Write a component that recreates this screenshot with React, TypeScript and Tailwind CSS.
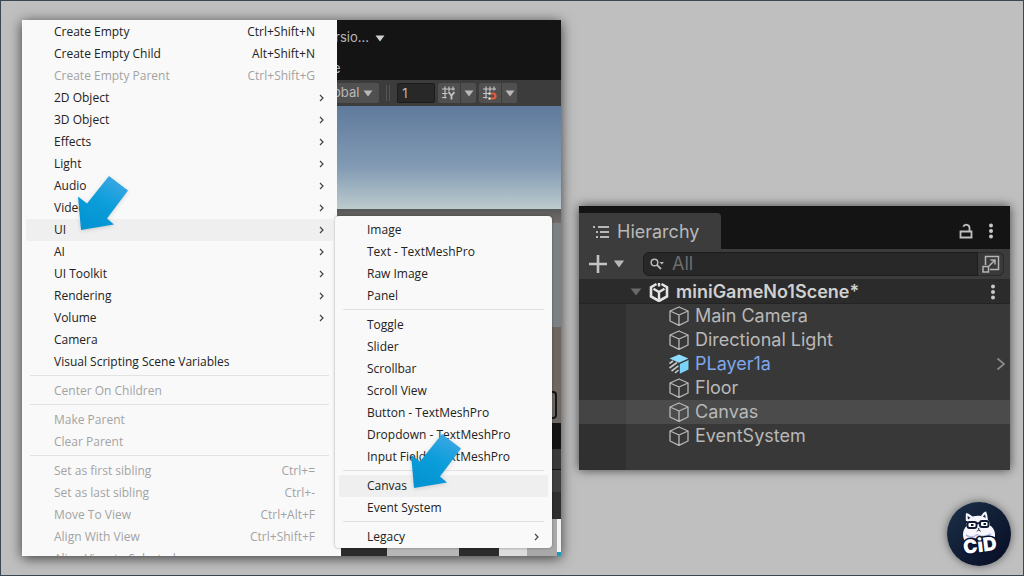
import clsx from "clsx";
import type { ReactNode } from "react";

type Entry = {
  label: string;
  shortcut?: string;
  submenu?: boolean;
  disabled?: boolean;
  active?: boolean;
};

const objectMenu: Entry[][] = [
  [
    { label: "Create Empty", shortcut: "Ctrl+Shift+N" },
    { label: "Create Empty Child", shortcut: "Alt+Shift+N" },
    { label: "Create Empty Parent", shortcut: "Ctrl+Shift+G", disabled: true },
    { label: "2D Object", submenu: true },
    { label: "3D Object", submenu: true },
    { label: "Effects", submenu: true },
    { label: "Light", submenu: true },
    { label: "Audio", submenu: true },
    { label: "Video", submenu: true },
    { label: "UI", submenu: true, active: true },
    { label: "AI", submenu: true },
    { label: "UI Toolkit", submenu: true },
    { label: "Rendering", submenu: true },
    { label: "Volume", submenu: true },
    { label: "Camera" },
    { label: "Visual Scripting Scene Variables" }
  ],
  [{ label: "Center On Children", disabled: true }],
  [
    { label: "Make Parent", disabled: true },
    { label: "Clear Parent", disabled: true }
  ],
  [
    { label: "Set as first sibling", shortcut: "Ctrl+=", disabled: true },
    { label: "Set as last sibling", shortcut: "Ctrl+-", disabled: true },
    { label: "Move To View", shortcut: "Ctrl+Alt+F", disabled: true },
    { label: "Align With View", shortcut: "Ctrl+Shift+F", disabled: true },
    { label: "Align View to Selected", disabled: true }
  ]
];

const uiMenu: Entry[][] = [
  [
    { label: "Image" },
    { label: "Text - TextMeshPro" },
    { label: "Raw Image" },
    { label: "Panel" }
  ],
  [
    { label: "Toggle" },
    { label: "Slider" },
    { label: "Scrollbar" },
    { label: "Scroll View" },
    { label: "Button - TextMeshPro" },
    { label: "Dropdown - TextMeshPro" },
    { label: "Input Field - TextMeshPro" }
  ],
  [{ label: "Canvas", active: true }, { label: "Event System" }],
  [{ label: "Legacy", submenu: true }]
];

const sceneObjects = [
  { name: "Main Camera" },
  { name: "Directional Light" },
  { name: "PLayer1a", prefab: true },
  { name: "Floor" },
  { name: "Canvas", active: true },
  { name: "EventSystem" }
];

function Menu({ label, groups, className }: { label: string; groups: Entry[][]; className: string }) {
  return (
    <div
      role="menu"
      aria-label={label}
      className={clsx("bg-[#f9f9f9] font-['Open_Sans','Noto_Sans',sans-serif] text-xs text-[#222]", className)}
    >
      {groups.map((group, index) => (
        <div key={index}>
          {index > 0 ? <div role="separator" className="mx-2 mt-0.5 mb-1 h-px bg-[#e2e2e2]" /> : null}
          {group.map((entry) => (
            <button
              key={entry.label}
              type="button"
              role="menuitem"
              disabled={entry.disabled}
              className={clsx(
                "mx-1 flex h-[22px] w-[calc(100%-8px)] items-center rounded-xs pr-2 pl-7 text-left whitespace-nowrap",
                entry.active && "bg-[#efefef]",
                entry.disabled && "text-[#a3a3a3]"
              )}
            >
              <span className="flex-1">{entry.label}</span>
              {entry.shortcut ? <span className="pr-2.5">{entry.shortcut}</span> : null}
              {entry.submenu ? (
                <svg viewBox="0 0 8 8" className="size-2 fill-none stroke-[#444]">
                  <path d="M3 1 6 4 3 7" strokeWidth="1.2" />
                </svg>
              ) : null}
            </button>
          ))}
        </div>
      ))}
    </div>
  );
}

function Caret({ className }: { className: string }) {
  return (
    <svg viewBox="0 0 10 7" className={className} fill="currentColor">
      <path d="M.5.5h9L5 6.5z" />
    </svg>
  );
}

function Pointer({ id, className }: { id: string; className: string }) {
  return (
    <svg viewBox="0 0 52 57" className={clsx("absolute h-[57px] w-[52px] drop-shadow-sm", className)}>
      <defs>
        <linearGradient id={id} x1="0.8" y1="0" x2="0.3" y2="1">
          <stop offset="0" stopColor="#41a8e4" />
          <stop offset="0.5" stopColor="#0b9edb" />
          <stop offset="1" stopColor="#0493d2" />
        </linearGradient>
      </defs>
      <path d="M32 1 51 15.5 30 43.5 37 49.5 4 55 1 21.5 10 28.5z" fill={`url(#${id})`} />
    </svg>
  );
}

function GridIcon({ children }: { children: ReactNode }) {
  return (
    <svg viewBox="0 0 14 14" className="size-3.5 fill-none stroke-[#c4c4c4]">
      <path d="M0 3h13M0 7.5h5.5M0 11.5h4.5M3 .5v12M7 .5v5M11 .5v4" strokeWidth="1.2" />
      {children}
    </svg>
  );
}

function SceneView() {
  return (
    <div className="flex min-w-0 flex-1 flex-col overflow-hidden bg-[#141414] font-[Inter,sans-serif] text-[#b8b8b8]">
      <div className="flex h-9 items-center gap-1.5 text-[13px]">
        <span className="-ml-0.5">rsio...</span>
        <Caret className="h-[7px] w-2.5 text-[#d0d0d0]" />
      </div>
      <div className="h-6 text-[13px] leading-6">
        <span className="-ml-1">e</span>
      </div>
      <div className="flex h-[26px] items-center bg-[#3c3c3c] text-[13px]">
        <button type="button" className="-ml-1 flex h-5 items-center gap-1 rounded-xs bg-[#505050] pr-1.5">
          <span>obal</span>
          <Caret className="h-[7px] w-2.5" />
        </button>
        <div className="mx-[7px] h-4 w-1 border-x border-[#555]" />
        <input
          aria-label="Snap increment"
          defaultValue="1"
          className="mr-[3px] h-5 w-[38px] rounded-xs border border-[#1c1c1c] bg-[#282828] px-1 outline-none"
        />
        <div className="mr-[3px] flex gap-px">
          <button type="button" aria-label="Grid axis" className="flex h-5 w-[22px] items-center justify-center rounded-l-xs bg-[#505050]">
            <GridIcon>
              <path d="M6.5 6 9.5 9.5 12.500 6M9.5 9.5V13.5" strokeWidth="1.8" />
            </GridIcon>
          </button>
          <button type="button" aria-label="Grid axis options" className="flex h-5 w-[15px] items-center justify-center rounded-r-xs bg-[#505050]">
            <Caret className="h-[7px] w-2.5" />
          </button>
        </div>
        <div className="flex gap-px">
          <button type="button" aria-label="Grid snapping" className="flex h-5 w-[22px] items-center justify-center rounded-l-xs bg-[#505050]">
            <GridIcon>
              <path d="M7.5 7.5H10a2.500 2.500 0 0 1 0 5H7.500" className="stroke-[#e8593a]" strokeWidth="2.2" />
              <path d="M5.5 7.5h2M5.500 12.500h2" className="stroke-white" strokeWidth="2.2" />
            </GridIcon>
          </button>
          <button type="button" aria-label="Grid snapping options" className="flex h-5 w-[15px] items-center justify-center rounded-r-xs bg-[#505050]">
            <Caret className="h-[7px] w-2.5" />
          </button>
        </div>
      </div>

      {/* sky and ground */}
      <div className="h-[103px] bg-linear-to-b from-[#5f7a9c] via-[#839bb4] via-60% to-[#bccbcc]" />
      <div className="h-3.5 bg-linear-to-b from-[#59595a] to-[#716c69]" />
      <div className="h-[104px] bg-[#7b8184]" />
      <div className="flex h-24 items-end justify-end bg-[#6f6761]">
        <div className="mr-1 mb-1 h-7 w-6 rounded-sm border-2 border-[#161616]" />
      </div>
      <div className="h-[26px] bg-[#141414]" />
      <div className="h-5 bg-[#3a3a3a]" />
      <div className="mt-px h-[22px] bg-[#3e3e3e]" />
      <div className="h-[27px] bg-[#2f2f2f]" />
      <div className="flex flex-1 bg-[#fafafa]">
        <div className="ml-1 w-[46px] bg-[#2b2b2b]" />
        <div className="flex-1 bg-[#b7b7b7]" />
        <div className="w-10 bg-[#2b2b2b]" />
        <div className="w-7 bg-[#dcdcdc]" />
        <div className="w-[30px] bg-[#a9a9a9]" />
        <div className="flex w-1 items-end bg-[#f2f2f2]">
          <div className="h-1 w-full bg-[#1f9cb5]" />
        </div>
      </div>
    </div>
  );
}

function CubeIcon({ prefab }: { prefab?: boolean }) {
  if (prefab) {
    return (
      <svg viewBox="0 0 20 20" className="size-5">
        <path d="M10 .5 19.500 4.500 10 8.800 .5 4.500z" fill="#8fdcff" />
        <path d="M10.800 10 19.500 6v9.500L10.800 19.800z" fill="#7ad3fb" />
        <path d="M.5 9.500 4 7M.5 14 8 8.500M2.500 17 9.500 11.800M6 18.800 9.500 16" stroke="#c8c8c8" strokeWidth="1.6" />
      </svg>
    );
  }

  return (
    <svg viewBox="0 0 20 20" className="size-5 fill-none stroke-[#b8b8b8]">
      <path d="M10 1 19 5v10l-9 4.300L1 15V5zM1 5l9 4 9-4M10 9v10" strokeWidth="1.3" strokeLinejoin="round" />
    </svg>
  );
}

function MoreButton({ label }: { label: string }) {
  return (
    <button type="button" aria-label={label} className="flex size-4 items-center justify-center">
      <svg viewBox="0 0 4 16" className="h-4 w-1 fill-[#c8c8c8]">
        <circle cx="2" cy="2.500" r="2" />
        <circle cx="2" cy="8" r="2" />
        <circle cx="2" cy="13.500" r="2" />
      </svg>
    </button>
  );
}

function HierarchyPanel() {
  return (
    <section className="flex min-w-0 flex-1 flex-col self-start bg-[#383838] font-[Inter,sans-serif] text-lg text-[#b8b8b8] shadow-[0_0_10px_rgba(0,0,0,0.65)]">
      <header className="flex h-[43px] items-end justify-between bg-[#141414]">
        <h2 className="flex h-9 w-[142px] items-center gap-2 rounded-tr-sm bg-[#3c3c3c] pt-0.5 pl-3.5">
          <svg viewBox="0 0 16 14" className="h-3.5 w-4 fill-none stroke-[#b8b8b8]">
            <path d="M0 2h2M5 2h11M3 7h2M7 7h9M3 12h2M7 12h9" strokeWidth="1.8" />
          </svg>
          Hierarchy
        </h2>
        <div className="flex h-9 items-center gap-2.5 pr-[11px]">
          <button type="button" aria-label="Lock">
            <svg viewBox="0 0 14 16" className="h-4 w-3.5 fill-none stroke-[#c0c0c0]">
              <path d="M1.500 8.500h11v6h-11zM10.500 8V5a3.200 3.200 0 0 0-6.200-1.200" strokeWidth="1.8" />
            </svg>
          </button>
          <MoreButton label="Panel options" />
        </div>
      </header>

      <div className="flex h-[30px] items-center bg-[#3c3c3c] pr-1.5 pl-2.5">
        <button type="button" aria-label="Create" className="flex items-center gap-1.5">
          <svg viewBox="0 0 18 18" className="size-[18px] stroke-[#c4c4c4]">
            <path d="M9 0v18M0 9h18" strokeWidth="2.6" />
          </svg>
          <Caret className="h-2 w-3" />
        </button>
        <div className="ml-[18px] flex h-6 flex-1 items-center gap-2 rounded-l-md border border-[#1c1c1c] bg-[#282828] pl-1.5">
          <svg viewBox="0 0 14 12" className="h-3 w-3.5 shrink-0 fill-none stroke-[#b8b8b8]">
            <circle cx="4.500" cy="4.500" r="3.300" strokeWidth="1.5" />
            <path d="M7 7l4 4" strokeWidth="1.8" />
            <path d="M9.500 4H14l-2.200 2.500z" fill="#b8b8b8" stroke="none" />
          </svg>
          <input
            type="search"
            aria-label="Search hierarchy"
            placeholder="All"
            className="w-full min-w-0 bg-transparent outline-none placeholder:text-[#6e6e6e]"
          />
        </div>
        <button type="button" aria-label="Open search window" className="flex h-6 w-[26px] items-center justify-center rounded-r-md border border-l-0 border-[#2a2a2a] bg-[#3a3a3a]">
          <svg viewBox="0 0 18 18" className="size-[18px] fill-none stroke-[#b4b4b4]">
            <path d="M3.500 10V1.500h13v13H8M1 11.500h5.500V17H1zM7 11l6-6M8.500 5H13v4.500" strokeWidth="1.5" />
          </svg>
        </button>
      </div>

      <div className="flex h-[25px] items-center border-b border-[#242424] bg-[#2b2b2b] pt-px pr-[9px] pl-[51px]">
        <Caret className="h-3 w-3 text-[#696969]" />
        <svg viewBox="0 0 20 20" className="mx-[7px] size-5 fill-none stroke-[#e4e4e4]">
          <path d="M7.500 2 2 5.200v9.300L10 19l8-4.500V5.200L12.500 2" strokeWidth="2.6" />
          <path d="M4.500 6.800 10 10l5.500-3.200M10 10v7M10 1v3.500" strokeWidth="2.4" />
        </svg>
        <span className="flex-1 font-semibold text-[#d0d0d0]">miniGameNo1Scene*</span>
        <MoreButton label="Scene options" />
      </div>

      <ul className="bg-linear-to-r from-[#303030] from-[47px] to-[#383838] to-[47px] pb-[22px]">
        {sceneObjects.map((item) => (
          <li
            key={item.name}
            className={clsx(
              "flex h-6 items-center gap-1.5 pr-1 pl-[90px]",
              item.active && "bg-linear-to-r from-[#444] from-[47px] to-[#4b4b4b] to-[47px]",
              item.prefab && "text-[#7fa6ea]"
            )}
          >
            <CubeIcon prefab={item.prefab} />
            <span className="flex-1">{item.name}</span>
            {item.prefab ? (
              <svg viewBox="0 0 10 14" className="h-3.5 w-2.5 fill-none stroke-[#8a8a8a]">
                <path d="M1.500 1.500 8 7l-6.500 5.500" strokeWidth="1.7" />
              </svg>
            ) : null}
          </li>
        ))}
      </ul>
    </section>
  );
}

function ChannelLogo() {
  return (
    <div className="absolute right-3 bottom-[9px] size-16 rounded-full bg-linear-to-br from-[#1b3047] to-[#070d24] shadow-[0_0_8px_rgba(0,0,0,0.5)]">
      <svg viewBox="0 0 64 64" className="size-full" role="img" aria-label="CiD">
        <path
          d="M19 11c3 .5 4.800 2 6.500 3.600 2.800-.8 5.800-1 8.500-.6C35.500 11.800 36.800 10 39 9.500c1.300 2.700 1.600 5.500 1.800 8 1.500 1.500 2.200 4 2 6 4 2 5.700 6.500 5.200 11.500-10-1-20.500.5-30 4.500-3.500-6-2-12.500 2-16C18.600 19.500 18.500 15 19 11z"
          fill="#f6f6fc"
        />
        <path d="M19 33c4 3 8 2.500 11-.5 3 2.500 9 2.500 14-.5" fill="none" stroke="#b9bce0" strokeWidth="1.6" />
        <path d="M20.500 14l.5 3.500 2.500-1.800zM38 12.500l.8 3.500-3-1.500z" fill="#1b2748" />
        <g fill="#fff" stroke="#101a35" strokeWidth="1.900">
          <rect x="20.500" y="20" width="9" height="6" rx="2" />
          <rect x="33" y="19" width="8.500" height="6" rx="2" />
          <path d="M29.500 21.500 33 21M18.500 20h2" />
        </g>
        <path d="M24 23h2.500M36.500 22h2.500" stroke="#101a35" strokeWidth="1.8" />
        <path d="M30 29.500l1.700-1.700 2 1.500M31.700 26v1.800" fill="none" stroke="#101a35" strokeWidth="1" />
        <text
          x="33"
          y="50"
          textAnchor="middle"
          transform="rotate(-7 33 44)"
          fill="#fff"
          stroke="#0a1230"
          strokeWidth="3"
          paintOrder="stroke"
          className="font-[Inter,sans-serif] text-[19px] font-black"
        >
          CiD
        </text>
      </svg>
    </div>
  );
}

export default function App() {
  return (
    <main className="relative flex h-screen gap-[18px] border border-[#3a4651] bg-[#bfbfbf] py-[19px] pr-[13px] pl-[21px]">
      <section className="relative flex min-w-0 flex-[539] shadow-[0_2px_12px_rgba(0,0,0,0.7)]">
        <div className="flex min-w-0 flex-1 overflow-hidden">
          <Menu label="GameObject" groups={objectMenu} className="w-[315px] shrink-0 pt-px" />
          <SceneView />
        </div>
        <Menu
          label="UI"
          groups={uiMenu}
          className="absolute top-[196px] left-[313px] w-[217px] rounded-sm pt-[3px] shadow-[0_0_3px_rgba(0,0,0,0.35)]"
        />
        <Pointer id="pointer-ui" className="top-[155px] left-[55px]" />
        <Pointer id="pointer-canvas" className="top-[413px] left-[388px]" />
      </section>

      <div className="flex min-w-0 flex-[431] pt-[186px]">
        <HierarchyPanel />
      </div>

      <ChannelLogo />
    </main>
  );
}
